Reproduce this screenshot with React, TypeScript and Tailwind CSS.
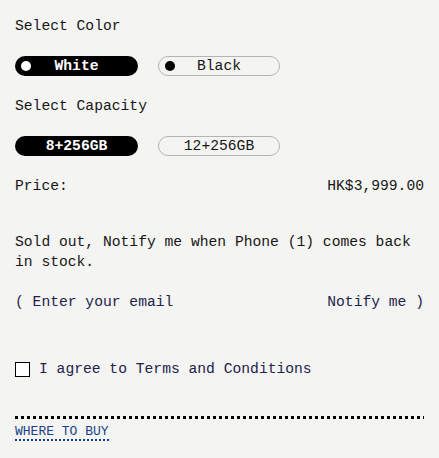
import React from "react";

export default function App() {
  const mono = { fontFamily: '"Liberation Mono", "Courier New", monospace' };
  return (
    <div
      className="w-[439px] h-[458px] bg-[#f4f4f2] text-[#161616] text-[14.67px] leading-[20px] px-[15px] pt-[16px] flex flex-col"
      style={mono}
    >
      <div>Select Color</div>
      <div className="flex gap-[20px] mt-[20px]">
        <button className="relative w-[123px] h-[20px] rounded-full bg-black text-white font-bold flex items-center justify-center leading-[20px]">
          <span className="absolute left-[6px] top-[5px] w-[10px] h-[10px] rounded-full bg-white" />
          White
        </button>
        <button className="relative w-[122px] h-[20px] rounded-full border border-[#b4b4b4] text-[#161616] flex items-center justify-center leading-[18px]">
          <span className="absolute left-[6px] top-[4px] w-[10px] h-[10px] rounded-full bg-black" />
          Black
        </button>
      </div>
      <div className="mt-[20px]">Select Capacity</div>
      <div className="flex gap-[20px] mt-[20px]">
        <button className="w-[123px] h-[20px] rounded-full bg-black text-white font-bold flex items-center justify-center leading-[20px]">
          8+256GB
        </button>
        <button className="w-[122px] h-[20px] rounded-full border border-[#b4b4b4] text-[#161616] flex items-center justify-center leading-[18px]">
          12+256GB
        </button>
      </div>
      <div className="flex justify-between mt-[20px]">
        <span>Price:</span>
        <span>HK$3,999.00</span>
      </div>
      <div className="mt-[36px]">
        Sold out, Notify me when Phone (1) comes back in stock.
      </div>
      <div className="flex justify-between mt-[20px] text-[#22224a]">
        <span>( Enter your email</span>
        <span>Notify me )</span>
      </div>
      <div className="flex items-center gap-[9px] mt-[47px] text-[#22224a]">
        <span className="w-[15px] h-[15px] border border-black bg-white shrink-0" />
        <span>I agree to Terms and Conditions</span>
      </div>
      <div className="mt-[37px] h-[3px] w-full bg-[repeating-linear-gradient(to_right,#000_0_3px,transparent_3px_6px)]" />
      <div className="mt-[2px]">
        <span className="text-[13px] leading-[15px] text-[#1a3f86] border-b-2 border-dotted border-[#0b3d91] inline-block">
          WHERE TO BUY
        </span>
      </div>
    </div>
  );
}
